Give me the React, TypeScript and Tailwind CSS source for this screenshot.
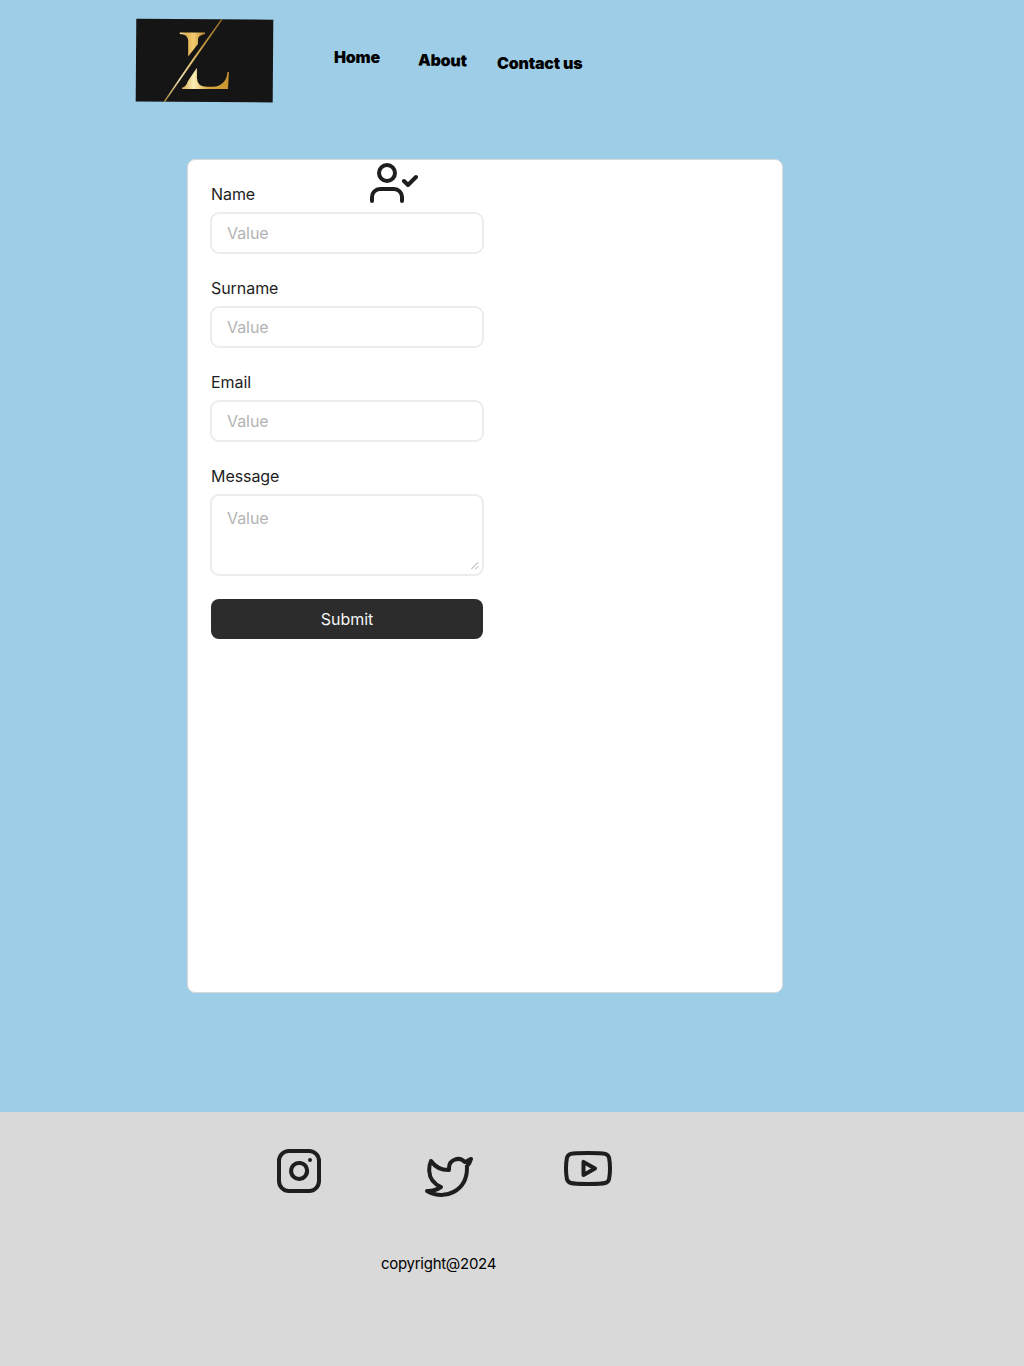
import type { ReactNode } from "react";

function Icon({ className, children }: { className: string; children: ReactNode }) {
  return (
    <svg
      className={`size-12 shrink-0 ${className}`}
      viewBox="0 0 24 24"
      fill="none"
      stroke="#1e1e1e"
      strokeWidth="2"
      strokeLinecap="round"
      strokeLinejoin="round"
    >
      {children}
    </svg>
  );
}

function Logo() {
  return (
    <svg className="ml-[135px] mt-[18px] h-[85px] w-[139px] shrink-0" viewBox="0 0 139 85">
      <defs>
        <linearGradient id="stem" x1="0" x2="1" y1="0" y2="0">
          <stop offset="0" stopColor="#f6e6a8" />
          <stop offset=".25" stopColor="#e0b052" />
          <stop offset=".55" stopColor="#f3cb70" />
          <stop offset="1" stopColor="#bd862a" />
        </linearGradient>
        <linearGradient id="base" x1="0" x2="1" y1="0" y2="0">
          <stop offset="0" stopColor="#d9ab50" />
          <stop offset=".25" stopColor="#fbf0b8" />
          <stop offset=".55" stopColor="#dba941" />
          <stop offset="1" stopColor="#c7932f" />
        </linearGradient>
        <linearGradient id="slash" x1="1" x2="0" y1="0" y2="1">
          <stop offset="0" stopColor="#a87820" />
          <stop offset=".4" stopColor="#e3b452" />
          <stop offset=".72" stopColor="#fbefb5" />
          <stop offset="1" stopColor="#c0943f" />
        </linearGradient>
      </defs>
      <path d="M1.3 .8L138.3 1.7L137.7 84.4L.7 83.4Z" fill="#151515" />
      <path d="M44.8 14.5H70V15.9C66 16.5 63.5 18 63 21V26L53.2 38.5V23C53 18 50 16.2 44.8 15.9Z" fill="url(#stem)" />
      <path d="M61.9 49.7V60Q62.3 68.8 72 68.8H79Q91.5 67 92.5 54H93.9L93 71H47V69.7Q51 69 53 63Z" fill="url(#base)" />
      <path d="M86.3 1.5L87.2 1.5L30 83.5L29 83.5L57.5 41.5Z" fill="url(#slash)" stroke="url(#slash)" strokeWidth=".5" />
    </svg>
  );
}

function Field({ label, multiline = false }: { label: string; multiline?: boolean }) {
  return (
    <label className="flex flex-col gap-2 text-base leading-[22px] tracking-[-0.06px] text-[#1e1e1e]">
      <span>{label}</span>
      {multiline ? (
        <span className="relative -m-px block h-[82px] w-[274px]">
          <textarea
            placeholder="Value"
            className="block h-full w-full resize-none rounded-[9px] border-2 border-[#ececec] bg-white px-[15px] py-[11px] leading-[22px] outline-none placeholder:text-[#b3b3b3]"
          />
          <svg className="absolute right-[5px] bottom-[6px] size-2" viewBox="0 0 8 8" fill="none" stroke="#a0a0a0">
            <path d="M.3 7.2L7.2 .3M4.3 7.2L7.2 4.3" />
          </svg>
        </span>
      ) : (
        <input
          placeholder="Value"
          className="-m-px block h-[42px] w-[274px] rounded-[9px] border-2 border-[#ececec] bg-white px-[15px] outline-none placeholder:text-[#b3b3b3]"
        />
      )}
    </label>
  );
}

export default function App() {
  return (
    <div className="flex h-[1366px] w-[1024px] flex-col overflow-hidden bg-[#9ecde7] font-[Inter,sans-serif]">
      <header className="flex h-[159px] items-start">
        <Logo />
        <nav className="flex items-start text-base leading-5 font-black tracking-[-0.2px] whitespace-nowrap text-black">
          <a className="mt-[47px] ml-[60px] w-[84px]">Home</a>
          <a className="mt-[50px] w-[79px]"><span className="inline-block rotate-[1deg]">About</span></a>
          <a className="mt-[53px]">Contact us</a>
        </nav>
      </header>
      <main className="relative ml-[187px] h-[834px] w-[596px] shrink-0 rounded-lg border border-[#d9d9d9] bg-white">
        <form className="flex w-[295px] flex-col gap-6 pt-[23px] pl-[23px]">
          <Field label="Name" />
          <Field label="Surname" />
          <Field label="Email" />
          <Field label="Message" multiline />
          <button type="button" className="h-10 w-[272px] rounded-lg bg-[#2c2c2c] text-base text-[#f5f5f5]">
            Submit
          </button>
        </form>
        <Icon className="absolute -top-px left-[182px]">
          <path d="M16 21v-2a4 4 0 0 0-4-4H5a4 4 0 0 0-4 4v2" />
          <circle cx="8.5" cy="7" r="4" />
          <path d="M17 11l2 2 4-4" />
        </Icon>
      </main>
      <footer className="mt-[119px] h-[254px] shrink-0 bg-[#d9d9d9]">
        <div className="flex h-[142px] items-start pl-[275px]">
          <Icon className="mt-[35px]">
            <rect x="2" y="2" width="20" height="20" rx="5" />
            <path d="M16 11.37A4 4 0 1 1 12.63 8 4 4 0 0 1 16 11.37zM17.5 6.5h.01" />
          </Icon>
          <Icon className="mt-[41px] ml-[102px]">
            <path d="M23 3a10.9 10.9 0 0 1-3.14 1.53 4.48 4.48 0 0 0-7.86 3v1A10.66 10.66 0 0 1 3 4s-4 9 5 13a11.64 11.64 0 0 1-7 2c9 5 20 0 20-11.5a4.5 4.5 0 0 0-.08-.83A7.72 7.72 0 0 0 23 3z" />
          </Icon>
          <Icon className="mt-[33px] ml-[91px]">
            <path d="M22.54 6.42a2.78 2.78 0 0 0-1.94-2C18.88 4 12 4 12 4s-6.88 0-8.6.46a2.78 2.78 0 0 0-1.94 2A29 29 0 0 0 1 11.75a29 29 0 0 0 .46 5.33A2.78 2.78 0 0 0 3.4 19c1.72.46 8.6.46 8.6.46s6.88 0 8.6-.46a2.78 2.78 0 0 0 1.94-2 29 29 0 0 0 .46-5.25 29 29 0 0 0-.46-5.33z" />
            <path d="M9.75 15.02l5.75-3.27-5.75-3.27v6.54z" />
          </Icon>
        </div>
        <p className="ml-[381px] text-[15px] leading-5 tracking-[-0.28px] text-black">copyright@2024</p>
      </footer>
    </div>
  );
}
